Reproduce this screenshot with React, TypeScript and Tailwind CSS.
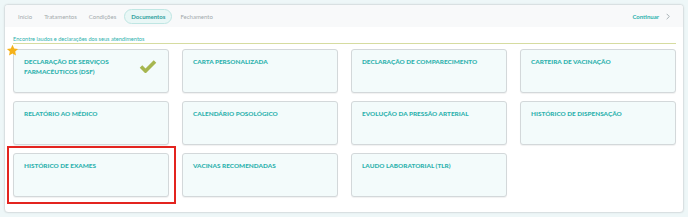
const tabs = ['Início', 'Tratamentos', 'Condições', 'Documentos', 'Fechamento']

const docs = [
  'Declaração de Serviços Farmacêuticos (DSF)',
  'Carta Personalizada',
  'Declaração de Comparecimento',
  'Carteira de Vacinação',
  'Relatório ao Médico',
  'Calendário Posológico',
  'Evolução da Pressão Arterial',
  'Histórico de Dispensação',
  'Histórico de Exames',
  'Vacinas Recomendadas',
  'Laudo Laboratorial (TLR)',
]

function Star() {
  return (
    <svg viewBox="0 0 24 24" className="absolute left-[-7px] top-[-5px] h-[13px] w-[13px]">
      <path
        d="M12 1.5l3.1 6.6 7.2.9-5.3 5 1.4 7.1L12 17.6l-6.4 3.5 1.4-7.1-5.3-5 7.2-.9z"
        fill="#f5b21a"
      />
    </svg>
  )
}

function Check() {
  return (
    <svg viewBox="0 0 18 14" className="h-[14px] w-[18px] shrink-0">
      <path d="M2 7.5l4.5 4.5L16 2.5" fill="none" stroke="#a6b64f" strokeWidth="3.6" />
    </svg>
  )
}

function DocCard({ title, index }: { title: string; index: number }) {
  const done = index === 0
  const highlighted = index === 8
  return (
    <div className="relative">
      {done && <Star />}
      {highlighted && (
        <div className="absolute left-[-6px] top-[-7px] right-[-7px] bottom-[-7px] border-2 border-[#e3241f]" />
      )}
      <div className="flex h-[44px] items-start justify-between rounded-[3px] border border-[#d3d8da] bg-[#f3fbfb] pl-[10px] pr-[11px] pt-[7px] shadow-[0_1px_1px_rgba(0,0,0,0.06)]">
        <span
          className={`text-[6.4px] font-black uppercase leading-[9.5px] text-[#2eb2ae] ${
            done ? 'max-w-[95px]' : ''
          }`}
        >
          {title}
        </span>
        {done && (
          <div className="pt-[2px]">
            <Check />
          </div>
        )}
      </div>
    </div>
  )
}

export default function App() {
  return (
    <div className="min-h-[217px] bg-[#eef7f8] p-[4px] font-['Lato','Open_Sans',sans-serif]">
      <div className="overflow-hidden rounded-[4px] border border-[#d9e0e2] bg-white shadow-[0_0_2px_rgba(0,0,0,0.08)]">
        {/* step tabs */}
        <div className="flex h-[22px] items-center justify-between bg-[#f8f9fa] pl-[9px] pr-[13px]">
          <div className="flex items-center gap-[4px]">
            {tabs.map((tab) =>
              tab === 'Documentos' ? (
                <span
                  key={tab}
                  className="rounded-full border border-[#bfe6e3] bg-[#e9f7f6] px-[6px] py-[2px] text-[6px] font-bold text-[#2f9f9c]"
                >
                  {tab}
                </span>
              ) : (
                <span key={tab} className="px-[4px] py-[3px] text-[6px] text-[#a3aaad]">
                  {tab}
                </span>
              ),
            )}
          </div>
          <div className="flex items-center gap-[7px] text-[6px] font-bold text-[#2eb2ae]">
            <span>Continuar</span>
            <svg viewBox="0 0 6 10" className="h-[7px] w-[4px]">
              <path d="M1 1l4 4-4 4" fill="none" stroke="#8a979c" strokeWidth="1.1" />
            </svg>
          </div>
        </div>

        <div className="pl-[8px] pr-[7px] pb-[15px]">
          <div className="mt-[8px] h-[9px] border-b border-[#d6dca0] text-[5.6px] leading-[8px] text-[#2eb2ae]">
            Encontre laudos e declarações dos seus atendimentos
          </div>
          <div className="mt-[5px] grid grid-cols-4 gap-x-[13px] gap-y-[8px]">
            {docs.map((d, i) => (
              <DocCard key={d} title={d} index={i} />
            ))}
          </div>
        </div>
      </div>
    </div>
  )
}
